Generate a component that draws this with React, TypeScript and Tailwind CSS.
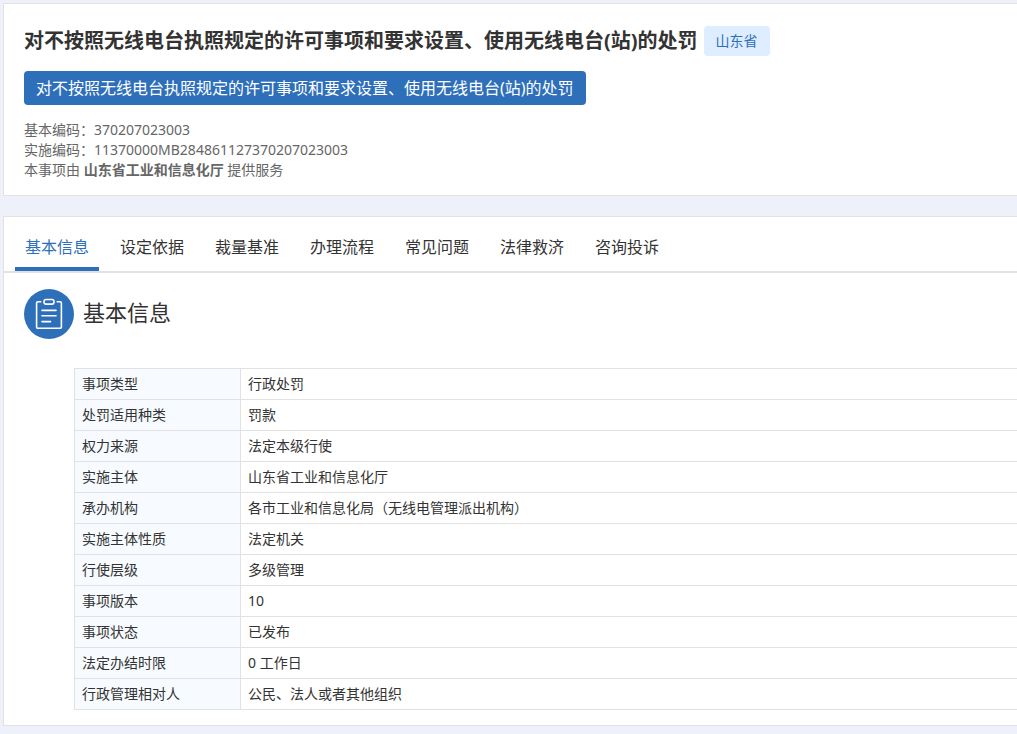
const title = '对不按照无线电台执照规定的许可事项和要求设置、使用无线电台(站)的处罚';

const tabs = ['基本信息', '设定依据', '裁量基准', '办理流程', '常见问题', '法律救济', '咨询投诉'];

const rows: [string, string][] = [
  ['事项类型', '行政处罚'],
  ['处罚适用种类', '罚款'],
  ['权力来源', '法定本级行使'],
  ['实施主体', '山东省工业和信息化厅'],
  ['承办机构', '各市工业和信息化局（无线电管理派出机构）'],
  ['实施主体性质', '法定机关'],
  ['行使层级', '多级管理'],
  ['事项版本', '10'],
  ['事项状态', '已发布'],
  ['法定办结时限', '0 工作日'],
  ['行政管理相对人', '公民、法人或者其他组织'],
];

function ClipboardBadge() {
  return (
    <svg className="size-[50px] shrink-0" viewBox="0 0 50 50" fill="none" aria-hidden="true">
      <circle cx="25" cy="25" r="25" fill="#2e6fba" />
      <g stroke="#fff" strokeWidth="1.6" strokeLinecap="round" strokeLinejoin="round">
        <path d="M16.8 12.7h-3a1.2 1.2 0 0 0-1.2 1.2v24.1a1.2 1.2 0 0 0 1.2 1.2h22.4a1.2 1.2 0 0 0 1.2-1.2V13.9a1.2 1.2 0 0 0-1.2-1.2h-3" />
        <rect x="20" y="10.5" width="10" height="4.6" rx="2.1" />
        <path d="M18 21.4h14M18 26.8h14M18 32.6h8.6" />
      </g>
    </svg>
  );
}

export default function App() {
  return (
    <div
      lang="zh-CN"
      className="min-h-screen bg-[#eef1f9] pt-[3px] pb-2 pl-[3px] font-['Noto_Sans','Noto_Sans_CJK_SC',sans-serif] text-sm text-[#333]"
    >
      <header className="border-y border-l border-[#e2e2e2] bg-white px-5 pt-[22px] pb-[15px]">
        <div className="flex items-center gap-[6px]">
          <h1 className="text-xl leading-[30px] font-bold whitespace-nowrap">{title}</h1>
          <span className="rounded bg-[#deedff] px-3 leading-[30px] text-[#2e6fba]">山东省</span>
        </div>
        <button
          type="button"
          className="mt-[15px] block rounded bg-[#2e6fba] px-3 text-base leading-[34px] whitespace-nowrap text-white"
        >
          {title}
        </button>
        <div className="mt-[15px] leading-5 text-[#666]">
          <p>基本编码：370207023003</p>
          <p>实施编码：11370000MB284861127370207023003</p>
          <p>
            本事项由 <strong className="font-bold">山东省工业和信息化厅</strong> 提供服务
          </p>
        </div>
      </header>

      <main className="mt-5 border-y border-l border-[#e2e2e2] bg-white">
        <nav className="flex gap-[11px] border-b-2 border-[#e2e2e2] px-[11px] pt-[10px]">
          {tabs.map((tab, i) => (
            <a
              key={tab}
              href="#"
              aria-current={i === 0 ? 'page' : undefined}
              className={
                i === 0
                  ? 'border-b-4 border-[#2e6fba] px-[10px] text-base leading-10 text-[#2e6fba]'
                  : 'border-b-4 border-transparent px-[10px] text-base leading-10'
              }
            >
              {tab}
            </a>
          ))}
        </nav>

        <section className="pt-4 pb-[15px] pl-5">
          <div className="flex gap-[9px]">
            <ClipboardBadge />
            <h2 className="text-[22px] leading-[46px]">基本信息</h2>
          </div>
          <div className="mt-[29px] pl-[50px]">
            <table className="w-full border-separate border-spacing-0 border-t border-l border-[#e2e2e2]">
              <tbody>
                {rows.map(([label, value]) => (
                  <tr key={label}>
                    <th
                      scope="row"
                      className="w-[166px] border-r border-b border-[#e2e2e2] bg-[#f7fbff] px-[7px] py-[5px] text-left leading-5 font-normal"
                    >
                      {label}
                    </th>
                    <td className="border-b border-[#e2e2e2] px-[7px] py-[5px] leading-5">{value}</td>
                  </tr>
                ))}
              </tbody>
            </table>
          </div>
        </section>
      </main>
    </div>
  );
}
